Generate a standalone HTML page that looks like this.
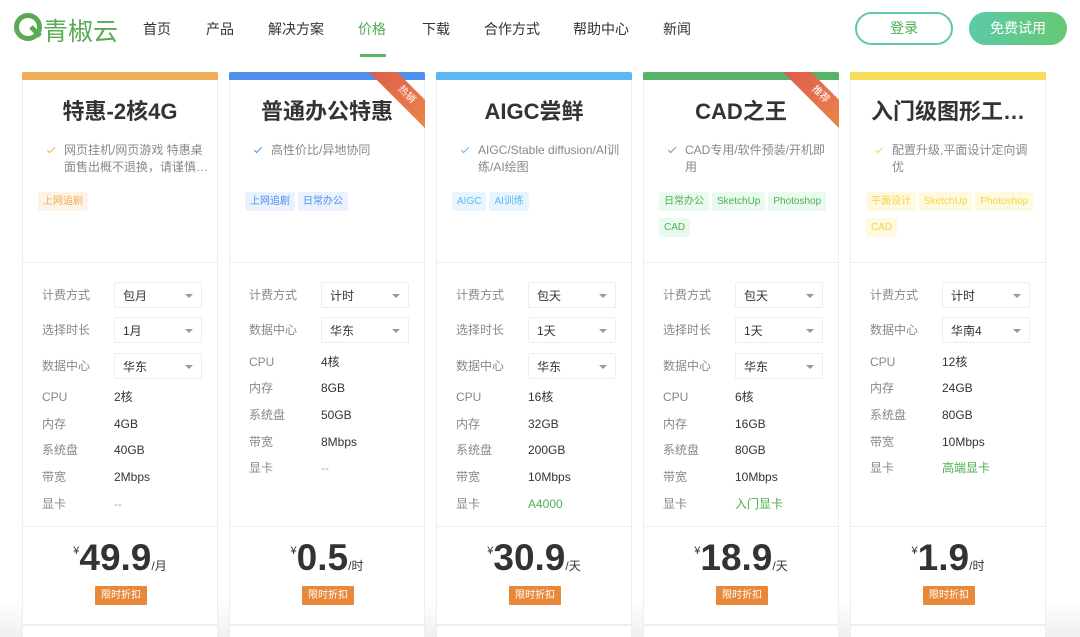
<!DOCTYPE html><html><head><meta charset="utf-8"><style>
*{margin:0;padding:0;box-sizing:border-box}
html,body{width:1080px;height:637px;overflow:hidden}
body{background:#fff;font-family:"Liberation Sans","Noto Sans CJK SC",sans-serif;color:#333;position:relative}
.nav a{position:absolute;top:19px;font-size:14px;color:#333;transform:translateX(-50%);white-space:nowrap}
.btn{position:absolute;top:12px;height:33px;width:98px;border-radius:17px;font-size:14px;text-align:center;line-height:33px}
.card{position:absolute;top:72px;width:196px;height:553px;border:1px solid #eee;border-top:none;background:#fff}
.card2{position:absolute;top:625px;width:196px;height:20px;background:#fff;border:1px solid #eee}
.bar{position:absolute;left:-1px;right:-1px;top:0;height:8px;border-radius:2px 2px 0 0}
.title{position:absolute;top:22px;left:0;right:0;text-align:center;font-size:22px;font-weight:bold;color:#333;white-space:nowrap}
.desc{position:absolute;top:70px;left:41px;right:8px;font-size:12px;line-height:17px;color:#888;max-height:34px;overflow:hidden}
.ck{position:absolute;left:24px;top:75px;width:8px;height:4px;border-left:1.5px solid;border-bottom:1.5px solid;transform:rotate(-45deg)}
.tags{position:absolute;top:120px;left:15px;right:4px;font-size:10px}
.tags span{display:inline-block;height:19px;line-height:19px;padding:0 5px;margin:0 3px 7px 0;border-radius:2px}
.hr{position:absolute;left:0;right:0;height:1px;background:#eee}
.row{position:absolute;left:19px;font-size:12px;color:#888;height:26px;line-height:26px;width:170px}
.row b{position:absolute;left:72px;font-weight:normal;color:#333;white-space:nowrap}
.sel{position:absolute;left:72px;top:0;width:88px;height:26px;border:1px solid #eee;border-radius:2px;color:#333;padding-left:8px}
.sel:after{content:"";position:absolute;right:8px;top:11px;border:4px solid transparent;border-top:4px solid #999;}
.price{position:absolute;top:465px;left:0;right:0;text-align:center;white-space:nowrap;color:#333}
.price i{font-style:normal;font-size:11px;vertical-align:top;position:relative;top:8px}
.price big{font-size:37px;font-weight:bold}
.price small{font-size:12px}
.disc{position:absolute;top:514px;left:72px;width:52px;height:19px;background:#e8883a;color:#fff;font-size:10px;line-height:19px;text-align:center;border-radius:1px}
.rib{position:absolute;right:-1px;top:0;width:58px;height:58px;overflow:hidden}
.rib div{position:absolute;width:90px;height:20px;right:-26px;top:13px;transform:rotate(45deg);background:linear-gradient(90deg,#dc5a4a,#ec8a4a);color:#fff;font-size:10px;text-align:center;line-height:20px}
.g{color:#4caf50!important}
</style></head><body>
<div style="position:absolute;left:14px;top:13px;width:28px;height:28px;border:5px solid #5aa954;border-radius:50%"></div>
<div style="position:absolute;left:29px;top:29px;width:13px;height:5px;background:#5aa954;transform:rotate(45deg)"></div>
<div style="position:absolute;left:43px;top:12px;font-size:25px;color:#5aa954">青椒云</div>
<div class="nav">
<a style="left:157px">首页</a><a style="left:220px">产品</a><a style="left:296px">解决方案</a><a style="left:372px;color:#4caf50">价格</a><a style="left:436px">下载</a><a style="left:512px">合作方式</a><a style="left:601px">帮助中心</a><a style="left:677px">新闻</a>
</div>
<div style="position:absolute;left:360px;top:54px;width:26px;height:3px;background:#5cb85c"></div>
<div class="btn" style="left:855px;border:2px solid #5fcaa0;color:#4caf50;line-height:29px">登录</div>
<div class="btn" style="left:969px;background:linear-gradient(90deg,#5ccba6,#66c774);color:#fff">免费试用</div>

<div style="position:absolute;left:0;right:0;top:600px;height:37px;background:linear-gradient(rgba(245,245,245,0),#f0f0f0)"></div>
<div class="card2" style="left:22px"></div><div class="card2" style="left:229px"></div><div class="card2" style="left:436px"></div><div class="card2" style="left:643px"></div><div class="card2" style="left:850px"></div>

<div class="card" style="left:22px">
<div class="bar" style="background:#efae57"></div>
<div class="title">特惠-2核4G</div>
<div class="ck" style="color:#efae57"></div><div class="desc">网页挂机/网页游戏 特惠桌<br>面售出概不退换，请谨慎…</div>
<div class="tags"><span style="background:#fdf3e6;color:#efae57">上网追剧</span></div>
<div class="hr" style="top:190px"></div>
<div class="row" style="top:210px">计费方式<div class="sel">包月</div></div>
<div class="row" style="top:245px">选择时长<div class="sel">1月</div></div>
<div class="row" style="top:281px">数据中心<div class="sel">华东</div></div>
<div class="row" style="top:312px">CPU<b>2核</b></div>
<div class="row" style="top:339px">内存<b>4GB</b></div>
<div class="row" style="top:365px">系统盘<b>40GB</b></div>
<div class="row" style="top:392px">带宽<b>2Mbps</b></div>
<div class="row" style="top:419px">显卡<b style="color:#aaa">--</b></div>
<div class="hr" style="top:454px"></div>
<div class="price"><i>¥</i><big>49.9</big><small>/月</small></div>
<div class="disc">限时折扣</div>
</div>

<div class="card" style="left:229px">
<div class="bar" style="background:#4f8ff0"></div>
<div class="rib"><div>热销</div></div>
<div class="title">普通办公特惠</div>
<div class="ck" style="color:#4f8ff0"></div><div class="desc">高性价比/异地协同</div>
<div class="tags"><span style="background:#eaf2fe;color:#4f8ff0">上网追剧</span><span style="background:#eaf2fe;color:#4f8ff0">日常办公</span></div>
<div class="hr" style="top:190px"></div>
<div class="row" style="top:210px">计费方式<div class="sel">计时</div></div>
<div class="row" style="top:245px">数据中心<div class="sel">华东</div></div>
<div class="row" style="top:277px">CPU<b>4核</b></div>
<div class="row" style="top:303px">内存<b>8GB</b></div>
<div class="row" style="top:330px">系统盘<b>50GB</b></div>
<div class="row" style="top:357px">带宽<b>8Mbps</b></div>
<div class="row" style="top:383px">显卡<b style="color:#aaa">--</b></div>
<div class="hr" style="top:454px"></div>
<div class="price"><i>¥</i><big>0.5</big><small>/时</small></div>
<div class="disc">限时折扣</div>
</div>

<div class="card" style="left:436px">
<div class="bar" style="background:#5bb8f5"></div>
<div class="title">AIGC尝鲜</div>
<div class="ck" style="color:#5bb8f5"></div><div class="desc">AIGC/Stable diffusion/AI训<br>练/AI绘图</div>
<div class="tags"><span style="background:#e8f5fe;color:#5bb8f5">AIGC</span><span style="background:#e8f5fe;color:#5bb8f5">AI训练</span></div>
<div class="hr" style="top:190px"></div>
<div class="row" style="top:210px">计费方式<div class="sel">包天</div></div>
<div class="row" style="top:245px">选择时长<div class="sel">1天</div></div>
<div class="row" style="top:281px">数据中心<div class="sel">华东</div></div>
<div class="row" style="top:312px">CPU<b>16核</b></div>
<div class="row" style="top:339px">内存<b>32GB</b></div>
<div class="row" style="top:365px">系统盘<b>200GB</b></div>
<div class="row" style="top:392px">带宽<b>10Mbps</b></div>
<div class="row" style="top:419px">显卡<b class="g">A4000</b></div>
<div class="hr" style="top:454px"></div>
<div class="price"><i>¥</i><big>30.9</big><small>/天</small></div>
<div class="disc">限时折扣</div>
</div>

<div class="card" style="left:643px">
<div class="bar" style="background:#57b26a"></div>
<div class="rib"><div>推荐</div></div>
<div class="title">CAD之王</div>
<div class="ck" style="color:#57b26a"></div><div class="desc">CAD专用/软件预装/开机即<br>用</div>
<div class="tags"><span style="background:#eafaee;color:#4caf50">日常办公</span><span style="background:#eafaee;color:#4caf50">SketchUp</span><span style="background:#eafaee;color:#4caf50">Photoshop</span><span style="background:#eafaee;color:#4caf50">CAD</span></div>
<div class="hr" style="top:190px"></div>
<div class="row" style="top:210px">计费方式<div class="sel">包天</div></div>
<div class="row" style="top:245px">选择时长<div class="sel">1天</div></div>
<div class="row" style="top:281px">数据中心<div class="sel">华东</div></div>
<div class="row" style="top:312px">CPU<b>6核</b></div>
<div class="row" style="top:339px">内存<b>16GB</b></div>
<div class="row" style="top:365px">系统盘<b>80GB</b></div>
<div class="row" style="top:392px">带宽<b>10Mbps</b></div>
<div class="row" style="top:419px">显卡<b class="g">入门显卡</b></div>
<div class="hr" style="top:454px"></div>
<div class="price"><i>¥</i><big>18.9</big><small>/天</small></div>
<div class="disc">限时折扣</div>
</div>

<div class="card" style="left:850px">
<div class="bar" style="background:#f8dc5c"></div>
<div class="title">入门级图形工…</div>
<div class="ck" style="color:#f8dc5c"></div><div class="desc">配置升级,平面设计定向调<br>优</div>
<div class="tags"><span style="background:#fff9e0;color:#f5d54a">平面设计</span><span style="background:#fff9e0;color:#f5d54a">SketchUp</span><span style="background:#fff9e0;color:#f5d54a">Photoshop</span><span style="background:#fff9e0;color:#f5d54a">CAD</span></div>
<div class="hr" style="top:190px"></div>
<div class="row" style="top:210px">计费方式<div class="sel">计时</div></div>
<div class="row" style="top:245px">数据中心<div class="sel">华南4</div></div>
<div class="row" style="top:277px">CPU<b>12核</b></div>
<div class="row" style="top:303px">内存<b>24GB</b></div>
<div class="row" style="top:330px">系统盘<b>80GB</b></div>
<div class="row" style="top:357px">带宽<b>10Mbps</b></div>
<div class="row" style="top:383px">显卡<b class="g">高端显卡</b></div>
<div class="hr" style="top:454px"></div>
<div class="price"><i>¥</i><big>1.9</big><small>/时</small></div>
<div class="disc">限时折扣</div>
</div>
</body></html>
